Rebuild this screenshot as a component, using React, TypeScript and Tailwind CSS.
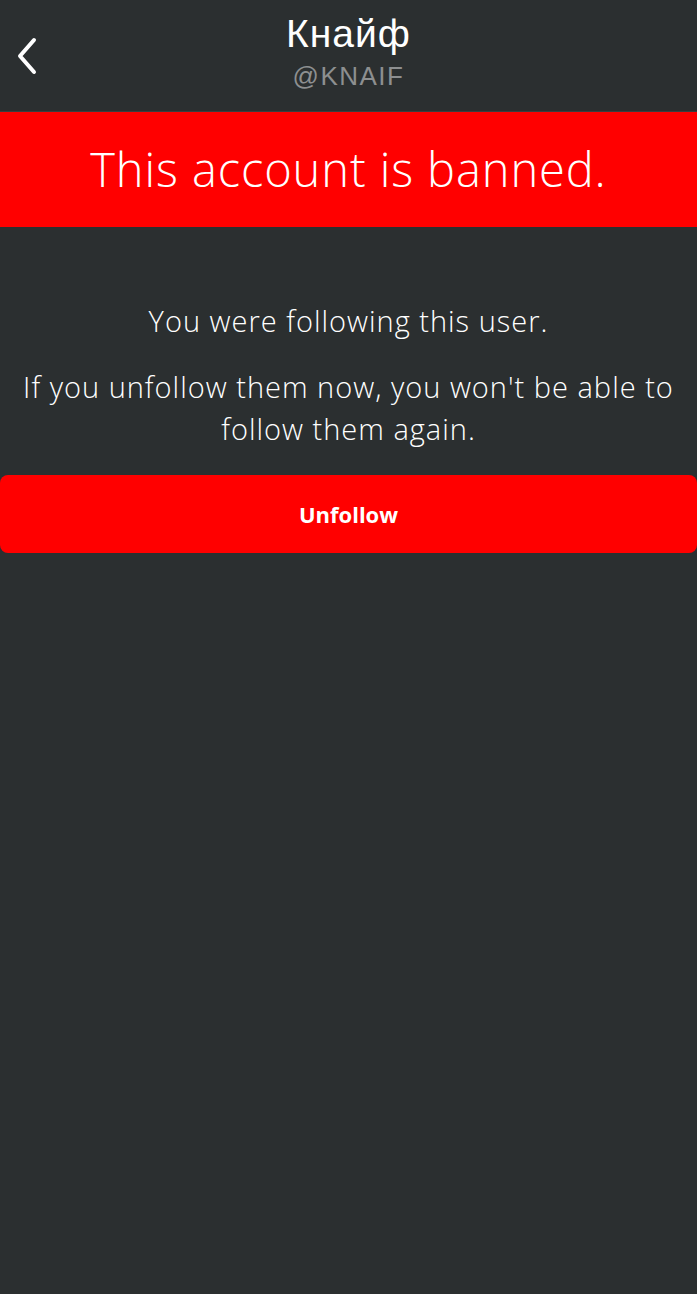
import React from 'react';

const BackIcon: React.FC = () => (
  <svg width="28" height="40" viewBox="0 0 28 40" fill="none">
    <path d="M20 4 L6 20 L20 36" stroke="white" strokeWidth="4" strokeLinecap="round" strokeLinejoin="round" />
  </svg>
);

const App: React.FC = () => {
  return (
    <div className="min-h-[1294px] w-full bg-[#2b2f30] text-white" style={{ fontFamily: '"Open Sans", Lato, sans-serif' }}>
      {/* Header */}
      <div className="relative flex h-[112px] flex-col items-center border-b border-[#3a3e40]">
        <button className="absolute left-[14px] top-[36px]">
          <BackIcon />
        </button>
        <div className="mt-[10px] text-[39px] leading-[48px] tracking-[1px]" style={{ fontFamily: '"Liberation Sans", Arial, sans-serif' }}>
          Кнайф
        </div>
        <div className="mt-[2px] text-[26px] leading-[32px] tracking-[1.5px] text-[#8d8f90]" style={{ fontFamily: '"Liberation Sans", Arial, sans-serif' }}>
          @KNAIF
        </div>
      </div>

      {/* Banned banner */}
      <div className="flex h-[115px] items-center justify-center bg-[#ff0000]">
        <span className="text-[47px] font-light tracking-[0.9px]">This account is banned.</span>
      </div>

      {/* Body */}
      <div className="pt-[73px] text-center">
        <p className="text-[29px] font-light leading-[42px] tracking-[1px]">You were following this user.</p>
        <p className="mt-[24px] px-3 text-[29px] font-light leading-[42px] tracking-[1px]">
          If you unfollow them now, you won't be able to follow them again.
        </p>
      </div>

      <button className="mt-[25px] flex h-[78px] w-full items-center justify-center rounded-[8px] bg-[#ff0000] text-[22px] font-bold">
        Unfollow
      </button>
    </div>
  );
};

export default App;
